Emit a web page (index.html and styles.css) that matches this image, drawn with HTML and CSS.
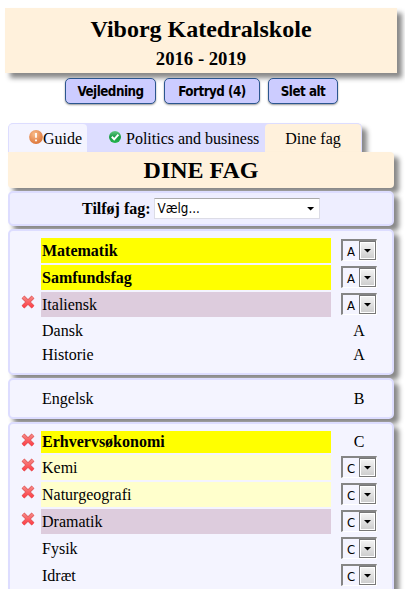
FILE: index.html
```html
<!DOCTYPE html>
<html lang="da">
<head>
<meta charset="utf-8">
<title>Viborg Katedralskole</title>
<link rel="stylesheet" href="styles.css">
</head>
<body>
<svg class="defs" width="0" height="0" aria-hidden="true">
  <defs>
    <linearGradient id="red" x1="0" y1="0" x2="0" y2="1"><stop offset="0" stop-color="#f58582"/><stop offset="1" stop-color="#ff4048"/></linearGradient>
    <radialGradient id="orange" cx=".4" cy=".3" r=".7"><stop offset="0" stop-color="#f9bd8c"/><stop offset="1" stop-color="#dd763b"/></radialGradient>
    <linearGradient id="green" x1="0" y1="0" x2="0" y2="1"><stop offset="0" stop-color="#62c982"/><stop offset=".5" stop-color="#199b45"/><stop offset="1" stop-color="#24b64c"/></linearGradient>
    <symbol id="cross" viewBox="0 0 14 14">
      <path d="M2 2 12 12M12 2 2 12" fill="none" stroke="#dc595c" stroke-width="4"/>
      <path d="M2 2 12 12M12 2 2 12" fill="none" stroke="url(#red)" stroke-width="2.6"/>
    </symbol>
  </defs>
</svg>
<header class="banner">
  <h1>Viborg Katedralskole</h1>
  <h2>2016 - 2019</h2>
</header>
<nav class="actions">
  <button class="guide-btn">Vejledning</button>
  <button class="undo-btn">Fortryd (4)</button>
  <button class="clear-btn">Slet alt</button>
</nav>
<main>
  <div class="tabs">
    <div class="tab tab-guide"><svg width="14" height="14" viewBox="0 0 14 14"><circle cx="7" cy="7" r="6.9" fill="url(#orange)"/><path d="M7 3v4.8M7 9.4v1.8" stroke="#fff" stroke-width="1.8"/></svg><span>Guide</span></div>
    <div class="tab tab-line"><svg width="12" height="12" viewBox="0 0 12 12"><circle cx="6" cy="6" r="6" fill="url(#green)"/><path d="M2.8 5.8 5.2 8.3 9.4 3.7" fill="none" stroke="#fff" stroke-width="2"/></svg><span>Politics and business</span></div>
    <div class="tab tab-own"><span>Dine fag</span></div>
  </div>
  <h1 class="title">DINE FAG</h1>
  <section class="panel add">
    <b>Tilføj fag:</b>
    <div class="picker"><span>Vælg...</span><i class="arrow"></i></div>
  </section>
  <section class="panel">
    <div class="row tall"><i></i><b class="name yellow">Matematik</b><div class="level"><span>A</span><i><i class="arrow"></i></i></div></div>
    <div class="row tall"><i></i><b class="name yellow">Samfundsfag</b><div class="level"><span>A</span><i><i class="arrow"></i></i></div></div>
    <div class="row tall"><svg class="cross"><use href="#cross"/></svg><span class="name mauve">Italiensk</span><div class="level"><span>A</span><i><i class="arrow"></i></i></div></div>
    <div class="row plain"><i></i><span class="name">Dansk</span><span class="grade">A</span></div>
    <div class="row plain"><i></i><span class="name">Historie</span><span class="grade">A</span></div>
  </section>
  <section class="panel">
    <div class="row plain"><i></i><span class="name">Engelsk</span><span class="grade">B</span></div>
  </section>
  <section class="panel">
    <div class="row"><svg class="cross"><use href="#cross"/></svg><b class="name yellow">Erhvervsøkonomi</b><span class="grade">C</span></div>
    <div class="row tall"><svg class="cross"><use href="#cross"/></svg><span class="name pale">Kemi</span><div class="level"><span>C</span><i><i class="arrow"></i></i></div></div>
    <div class="row tall"><svg class="cross"><use href="#cross"/></svg><span class="name pale">Naturgeografi</span><div class="level"><span>C</span><i><i class="arrow"></i></i></div></div>
    <div class="row tall"><svg class="cross"><use href="#cross"/></svg><span class="name mauve">Dramatik</span><div class="level"><span>C</span><i><i class="arrow"></i></i></div></div>
    <div class="row tall"><i></i><span class="name">Fysik</span><div class="level"><span>C</span><i><i class="arrow"></i></i></div></div>
    <div class="row tall"><i></i><span class="name">Idræt</span><div class="level"><span>C</span><i><i class="arrow"></i></i></div></div>
  </section>
</main>
</body>
</html>
```
FILE: styles.css
```css
* { box-sizing: border-box; }
html { height: 589px; overflow: hidden; }
body { margin: 0; padding: 8px 8px 0 5px; height: 589px; overflow: hidden; background: #fff; color: #000; font: 16px/20px "Liberation Serif", serif; white-space: nowrap; }
.defs { display: block; height: 0; }
h1, h2 { margin: 0; text-align: center; }
.banner { height: 65px; background: #fff1dc; box-shadow: 5px 5px 5px #888; padding-top: 7px; }
h1 { font-size: 24px; line-height: 28px; }
h2 { font-size: 18.7px; line-height: 22px; margin-top: 5px; }
.actions { display: flex; gap: 8px; margin: 5px 0 0 60px; position: relative; }
button { height: 26px; padding: 0; border: 1px solid #2b568f; border-radius: 5px; background: #ccf; color: #000; font: bold 13.3px "DejaVu Sans Condensed", "DejaVu Sans", sans-serif; letter-spacing: -.5px; box-shadow: 0 1px 2px #999; }
.guide-btn { width: 91px; }
.undo-btn { width: 96px; }
.clear-btn { width: 70px; }
main { margin: 19px 3px 0; }
.tabs { display: flex; width: 354px; height: 29px; border: 1px solid #ddf; border-bottom: 0; border-radius: 5px 5px 0 0; background: #ddf; box-shadow: 5px 5px 5px #888; }
.tab { display: flex; height: 28px; align-items: center; padding-top: 2px; border-radius: 4px 4px 0 0; }
.tab svg { flex: none; }
.tab-guide { width: 78px; padding-left: 20px; background: #f4f4ff; }
.tab-guide svg { margin-top: -5px; }
.tab-line { width: 178px; padding-left: 22px; gap: 5px; }
.tab-line svg { margin-top: -4px; }
.tab-own { flex: 1; justify-content: center; background: #fff1dc; }
.title { position: relative; height: 36px; border-radius: 0 4px 4px 4px; line-height: 36px; background: #fff1dc; box-shadow: 5px 5px 5px #888; }
.panel { position: relative; margin-top: 3px; padding: 7px 8px 8px; border: 2px solid #ddf; border-radius: 5px; background: #f4f4ff; box-shadow: 5px 5px 5px #888; }
.add { display: flex; height: 35px; padding: 0 0 0 72px; align-items: center; gap: 4px; background: #eef; }
.picker { display: flex; width: 166px; height: 21px; margin: 0 0 0 -1px; padding: 0 4px 0 3px; align-items: center; justify-content: space-between; border: 1px solid #dcdce6; border-top-color: #aaa; background: #fff; font: 13.3px "DejaVu Sans Condensed", sans-serif; }
.arrow { display: block; flex: none; width: 8px; height: 4px; background: #000; clip-path: polygon(0 0, 100% 0, 50% 100%); }
.row { display: grid; grid-template-columns: 14px 290px 36px; column-gap: 10px; height: 22px; padding-left: 3px; }
.row .name { margin-left: -4px; width: 290px; height: 22px; padding-left: 1px; line-height: 22px; }
.row + .row { margin-top: 2px; }
.row.tall .name { height: 25px; line-height: 26px; }
.row.tall { height: 25px; }
.cross { width: 14px; height: 14px; margin: 3px 0 0; }
.row:not(.tall) .cross { margin-top: 2px; }
.yellow { background: #ff0; }
.pale { background: #ffc; }
.mauve { background: #dcd; }
.grade { margin-left: -8px; text-align: center; line-height: 22px; }
.row.plain .name, .plain .grade { line-height: 24px; }
.level { display: flex; width: 36px; height: 22px; margin: 1px 0 0 -4px; border: 1px solid #fff; border-top: 2px solid #858585; border-left: 2px solid #858585; font: 13px/21px "DejaVu Sans Condensed", sans-serif; }
.level span { width: 16px; text-align: center; }
.level > i { display: flex; flex: none; width: 17px; height: 19px; align-items: center; justify-content: center; border: 1px solid #777; background: linear-gradient(#f5f5f5, #ccc); box-shadow: inset 0 0 0 1px #fff; }
```
